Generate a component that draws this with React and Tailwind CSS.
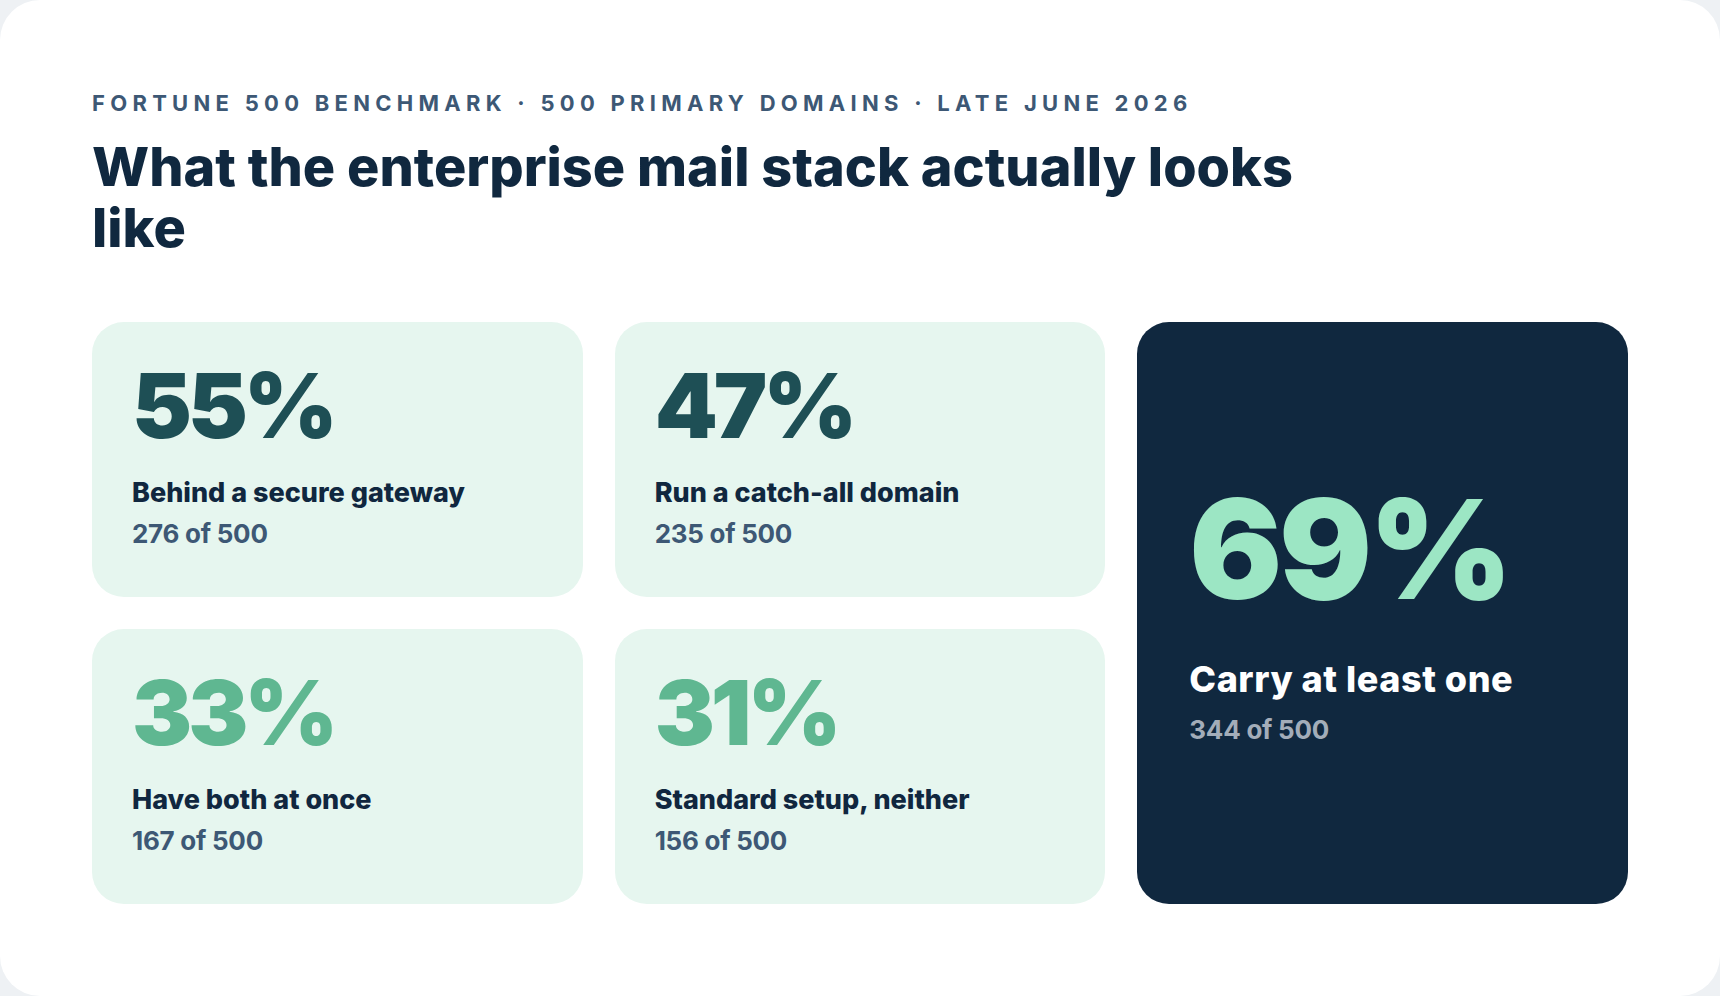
import React from 'react';

const stats=[
  {value:'55%',label:'Behind a secure gateway',count:'276 of 500',tone:'text-[#1e4f55]'},
  {value:'47%',label:'Run a catch-all domain',count:'235 of 500',tone:'text-[#1e4f55]'},
  {value:'33%',label:'Have both at once',count:'167 of 500',tone:'text-[#5fb791]'},
  {value:'31%',label:'Standard setup, neither',count:'156 of 500',tone:'text-[#5fb791]'},
];

const StatCard=({value,label,count,tone})=>(
  <div className="rounded-[32px] bg-[#e6f6ef] px-10 pt-[39px]">
    <div className={`text-[90px] leading-none font-black tracking-[-0.045em] ${tone}`}>{value}</div>
    <div className="mt-[26px] text-[27px] leading-[32px] font-extrabold text-[#10273f]">{label}</div>
    <div className="mt-[9px] text-[26px] leading-[32px] font-bold tracking-[-0.01em] text-[#3d5875]">{count}</div>
  </div>
);

const App=()=>{
  return(
    <div className="min-h-screen bg-[#eef1f4] font-['Inter','Noto_Sans',sans-serif]">
      <div className="h-[996px] rounded-[40px] bg-white px-[92px] pt-[92px]">
        <p className="text-[22px] leading-none font-bold tracking-[0.24em] text-[#3d5875]">
          FORTUNE 500 BENCHMARK · 500 PRIMARY DOMAINS · LATE JUNE 2026
        </p>
        <h1 className="mt-[22px] max-w-[1240px] text-[54px] leading-[61px] font-extrabold text-[#10283f]">
          What the enterprise mail stack actually looks like
        </h1>

        <div className="mt-[64px] grid grid-cols-3 grid-rows-[275px_275px] gap-8">
          <StatCard {...stats[0]}/>
          <StatCard {...stats[1]}/>
          <div className="row-span-2 flex flex-col justify-center rounded-[32px] bg-[#10283f] pl-[52px] pr-12">
            <div className="text-[138px] leading-none font-black tracking-[-0.025em] text-[#9ce6c4]">69%</div>
            <div className="mt-[41px] text-[36px] leading-[40px] font-extrabold tracking-[0.015em] text-white">Carry at least one</div>
            <div className="mt-[15px] text-[26px] leading-[32px] font-bold tracking-[-0.01em] text-[#a3adb9]">344 of 500</div>
          </div>
          <StatCard {...stats[2]}/>
          <StatCard {...stats[3]}/>
        </div>
      </div>
    </div>
  );
};

export default App;
